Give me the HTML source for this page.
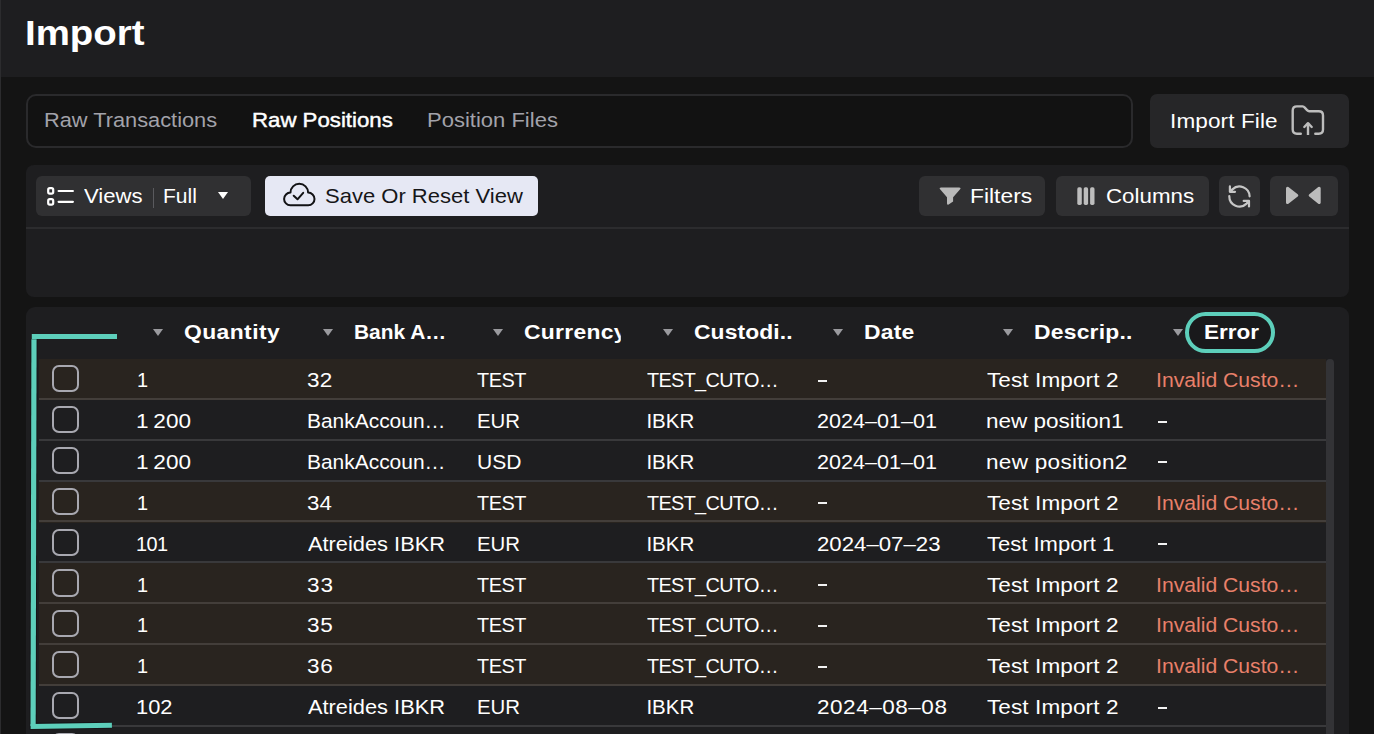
<!DOCTYPE html>
<html><head><meta charset="utf-8"><style>*{box-sizing:border-box;margin:0;padding:0}
html,body{width:1374px;height:734px;overflow:hidden;background:#141414;font-family:"Liberation Sans",sans-serif;color:#fff}
.a{position:absolute}
.t{position:absolute;line-height:24px;white-space:nowrap}
.btn{position:absolute;top:176px;height:40px;border-radius:6px;background:#303032}
.row{position:absolute;left:39px;width:1287px;background:#1e1e20}
.row.e{background:#29241f}
.sep{position:absolute;left:39px;width:1287px;height:2px;background:rgba(255,255,255,0.12)}
.cb{position:absolute;left:52px;width:27.2px;height:27.2px;border:2px solid #a8a8b0;border-radius:7px}
.tri{position:absolute;width:0;height:0;border-left:5.5px solid transparent;border-right:5.5px solid transparent;border-top:7px solid #9a9a9e}
</style></head><body>
<div class="a" style="left:0;top:0;width:1374px;height:77px;background:#1e1e20"></div>
<div class="a" style="left:0;top:0;width:1px;height:734px;background:#2c2c2e"></div>
<div class="a" style="left:26px;top:94px;width:1107px;height:54px;border:2px solid #2a2a2c;border-radius:10px;background:#121212"></div>
<div class="a" style="left:1150px;top:94px;width:199px;height:54px;border-radius:7px;background:#262628"></div>
<svg class="a" style="left:1285px;top:100px" width="46" height="40" viewBox="0 0 46 40" fill="none" stroke="#bdbdbd" stroke-width="2.4" stroke-linecap="round" stroke-linejoin="round">
<path d="M15.8 33.7H11.9Q7.7 33.7 7.7 29.5V10.6Q7.7 6.4 11.9 6.4H17.6Q18.8 6.4 19.5 7.4L22.3 10.3Q23 11.2 24.2 11.2H33.8Q38 11.2 38 15.4V29.5Q38 33.7 33.8 33.7H30.3"/>
<path d="M23 35V23.2" stroke-linecap="butt"/><path d="M19.3 27L23 23.2L26.7 27"/></svg>
<div class="a" style="left:26px;top:165px;width:1323px;height:132px;border-radius:8px;background:#1e1e20"></div>
<div class="a" style="left:26px;top:227px;width:1323px;height:2px;background:#2c2c2e"></div>
<div class="btn" style="left:36px;width:215px"></div>
<div class="btn" style="left:265px;width:273px;background:#e6e8f4;border-radius:5px"></div>
<div class="btn" style="left:919px;width:126px"></div>
<div class="btn" style="left:1056px;width:153px"></div>
<div class="btn" style="left:1219px;width:41px"></div>
<div class="btn" style="left:1270px;width:68px"></div>
<svg class="a" style="left:42px;top:182px" width="38" height="28" viewBox="0 0 38 28" fill="none" stroke="#fff" stroke-width="2.2" stroke-linecap="round">
<rect x="6.2" y="6.2" width="5" height="5.4" rx="1.6"/><rect x="6.2" y="17.2" width="5" height="5.4" rx="1.6"/>
<path d="M16.6 9H30.9M16.6 19.85H30.9"/></svg>
<div class="a" style="left:152.5px;top:188px;width:1.5px;height:20px;background:#5a5a5e"></div>
<div class="a" style="left:217.6px;top:192px;width:0;height:0;border-left:5.8px solid transparent;border-right:5.8px solid transparent;border-top:7px solid #fff"></div>
<svg class="a" style="left:278px;top:178px" width="44" height="34" viewBox="0 0 44 34" fill="none" stroke="#121214" stroke-width="2" stroke-linecap="round" stroke-linejoin="round">
<path d="M12.4 27.3A6.3 6.3 0 0 1 12.5 14.6A8.8 8.8 0 1 1 30.1 14.6A6.3 6.3 0 0 1 30.2 27.3Z"/>
<path d="M15.7 17.8L19.5 21.3L25.2 14.8"/></svg>
<svg class="a" style="left:934px;top:182px" width="32" height="28" viewBox="0 0 32 28">
<path d="M7 5.5H25.2Q27.4 5.5 26.1 7.3L19.1 15.3V19.6L14.6 22.4Q13 23.2 13 21.5V15.3L6.1 7.3Q4.8 5.5 7 5.5Z" fill="#b9b9b9"/></svg>
<svg class="a" style="left:1072px;top:182px" width="28" height="28" viewBox="0 0 28 28" fill="#bdbdbd">
<rect x="5.3" y="5.3" width="4.5" height="17.6" rx="1.6"/><rect x="11.7" y="5.3" width="4.4" height="17.6" rx="1.6"/><rect x="18.1" y="5.3" width="4.4" height="17.6" rx="1.6"/></svg>
<svg class="a" style="left:1224px;top:180.7px" width="32" height="32" viewBox="0 0 32 32" fill="none" stroke="#c6c6c6" stroke-width="2.2" stroke-linecap="round" stroke-linejoin="round">
<path d="M25.6 15.3A10.2 10.2 0 0 0 8.4 8.4L5.9 10.8M5.9 5.4V10.8H11"/>
<path d="M5.3 15.2A10.2 10.2 0 0 0 22.6 22.6L25 20M19.7 19.9H25V25.4"/></svg>
<svg class="a" style="left:1280px;top:180px" width="48" height="32" viewBox="0 0 48 32" fill="#bcbcbc" stroke="#bcbcbc" stroke-width="3" stroke-linejoin="round">
<path d="M7.5 8.3L16.8 15.4L7.5 22.5Z"/><path d="M39.2 8.3L30.2 15.4L39.2 22.5Z"/></svg>
<div class="a" style="left:26px;top:307px;width:1323px;height:460px;border-radius:9px;background:#1e1e20"></div>
<div class="row e" style="top:359.000px;height:40.875px"></div>
<div class="row" style="top:399.875px;height:40.875px"></div>
<div class="row" style="top:440.750px;height:40.875px"></div>
<div class="row e" style="top:481.625px;height:40.875px"></div>
<div class="row" style="top:522.500px;height:40.875px"></div>
<div class="row e" style="top:563.375px;height:40.875px"></div>
<div class="row e" style="top:604.250px;height:40.875px"></div>
<div class="row e" style="top:645.125px;height:40.875px"></div>
<div class="row" style="top:686.000px;height:40.875px"></div>
<div class="row" style="top:726.875px;height:40.875px"></div>
<div class="sep" style="top:397.775px"></div>
<div class="sep" style="top:438.650px"></div>
<div class="sep" style="top:479.525px"></div>
<div class="sep" style="top:520.400px"></div>
<div class="sep" style="top:561.275px"></div>
<div class="sep" style="top:602.150px"></div>
<div class="sep" style="top:643.025px"></div>
<div class="sep" style="top:683.900px"></div>
<div class="sep" style="top:724.775px"></div>
<div class="sep" style="top:765.650px"></div>
<div class="cb" style="top:365.000px"></div>
<div class="cb" style="top:405.875px"></div>
<div class="cb" style="top:446.750px"></div>
<div class="cb" style="top:487.625px"></div>
<div class="cb" style="top:528.500px"></div>
<div class="cb" style="top:569.375px"></div>
<div class="cb" style="top:610.250px"></div>
<div class="cb" style="top:651.125px"></div>
<div class="cb" style="top:692.000px"></div>
<div class="cb" style="top:732.875px"></div>
<div class="a" style="left:1326.3px;top:359.3px;width:7.8px;height:400px;border-radius:4px;background:#333336"></div>
<div class="tri" style="left:152.7px;top:328.6px"></div>
<div class="tri" style="left:322.8px;top:328.6px"></div>
<div class="tri" style="left:492.8px;top:328.6px"></div>
<div class="tri" style="left:662.8px;top:328.6px"></div>
<div class="tri" style="left:832.8px;top:328.6px"></div>
<div class="tri" style="left:1003px;top:328.6px"></div>
<div class="tri" style="left:1172.8px;top:328.6px"></div>
<div class="a" style="left:1185.2px;top:311.9px;width:90px;height:41.1px;border:4.9px solid #5dcfbb;border-radius:21px;background:#19191b"></div>
<div class="t" style="left:25.0px;top:20.5px;font-size:35px;font-weight:bold;color:#ffffff;letter-spacing:0.0px;transform:scaleX(1.0981);transform-origin:0 0">Import</div>
<div class="t" style="left:43.5px;top:107.8px;font-size:20.5px;font-weight:normal;color:#a2a2aa;letter-spacing:0.0px;transform:scaleX(1.0623);transform-origin:0 0">Raw Transactions</div>
<div class="t" style="left:251.6px;top:107.9px;font-size:20.5px;font-weight:normal;color:#ffffff;letter-spacing:0.0px;transform:scaleX(1.0837);transform-origin:0 0;-webkit-text-stroke:0.45px #fff">Raw Positions</div>
<div class="t" style="left:427.3px;top:107.9px;font-size:20.5px;font-weight:normal;color:#a2a2aa;letter-spacing:0.0px;transform:scaleX(1.0736);transform-origin:0 0">Position Files</div>
<div class="t" style="left:1169.5px;top:108.5px;font-size:20.5px;font-weight:normal;color:#ffffff;letter-spacing:0.1px;transform:scaleX(1.1);transform-origin:0 0">Import File</div>
<div class="t" style="left:83.9px;top:184.0px;font-size:20.8px;font-weight:normal;color:#ffffff;letter-spacing:-0.0px;transform:scaleX(1.0636);transform-origin:0 0">Views</div>
<div class="t" style="left:163.0px;top:184.0px;font-size:20.8px;font-weight:normal;color:#ffffff;letter-spacing:0.0px;transform:scaleX(1.0097);transform-origin:0 0">Full</div>
<div class="t" style="left:324.62px;top:183.6px;font-size:20.8px;font-weight:normal;color:#161618;letter-spacing:0.0px;transform:scaleX(1.0586);transform-origin:0 0">Save Or Reset View</div>
<div class="t" style="left:970.1px;top:183.5px;font-size:20.8px;font-weight:normal;color:#ffffff;letter-spacing:0.0px;transform:scaleX(1.0981);transform-origin:0 0">Filters</div>
<div class="t" style="left:1106.4px;top:183.5px;font-size:20.8px;font-weight:normal;color:#ffffff;letter-spacing:0.0px;transform:scaleX(1.0728);transform-origin:0 0">Columns</div>
<div class="t" style="left:183.8px;top:319.5px;font-size:20.8px;font-weight:bold;color:#ffffff;letter-spacing:0.377px;transform:scaleX(1.1);transform-origin:0 0">Quantity</div>
<div class="t" style="left:354.3px;top:319.5px;font-size:20.8px;font-weight:bold;color:#ffffff;letter-spacing:0.0px;transform:scaleX(1.0056);transform-origin:0 0">Bank A…</div>
<div class="t" style="left:524.0px;top:319.5px;font-size:20.8px;font-weight:bold;color:#ffffff;letter-spacing:0.26px;transform:scaleX(1.1);transform-origin:0 0;width:88.18px;overflow:hidden">Currency</div>
<div class="t" style="left:693.6px;top:319.5px;font-size:20.8px;font-weight:bold;color:#ffffff;letter-spacing:0.08px;transform:scaleX(1.1);transform-origin:0 0">Custodi..</div>
<div class="t" style="left:863.82px;top:319.5px;font-size:20.8px;font-weight:bold;color:#ffffff;letter-spacing:0.212px;transform:scaleX(1.1);transform-origin:0 0">Date</div>
<div class="t" style="left:1033.8px;top:319.5px;font-size:20.8px;font-weight:bold;color:#ffffff;letter-spacing:0.205px;transform:scaleX(1.1);transform-origin:0 0">Descrip..</div>
<div class="t" style="left:1204.4px;top:319.5px;font-size:20.8px;font-weight:bold;color:#ffffff;letter-spacing:0.0px;transform:scaleX(1.084);transform-origin:0 0">Error</div>
<div class="t" style="left:136.8px;top:368.2px;font-size:20.5px;font-weight:normal;color:#ffffff;letter-spacing:0px;transform:scaleX(0.97);transform-origin:0 0">1</div>
<div class="t" style="left:306.7px;top:368.2px;font-size:20.5px;font-weight:normal;color:#ffffff;letter-spacing:0.182px;transform:scaleX(1.1);transform-origin:0 0">32</div>
<div class="t" style="left:476.89px;top:368.2px;font-size:20.5px;font-weight:normal;color:#ffffff;letter-spacing:-0.46px;transform:scaleX(0.97);transform-origin:0 0">TEST</div>
<div class="t" style="left:646.89px;top:368.2px;font-size:20.5px;font-weight:normal;color:#ffffff;letter-spacing:-0.699px;transform:scaleX(0.97);transform-origin:0 0">TEST_CUTO…</div>
<div class="t" style="left:987.04px;top:368.2px;font-size:20.5px;font-weight:normal;color:#ffffff;letter-spacing:0.083px;transform:scaleX(1.1);transform-origin:0 0">Test Import 2</div>
<div class="t" style="left:1156.2px;top:368.2px;font-size:20.5px;font-weight:normal;color:#e8806a;letter-spacing:0.0px;transform:scaleX(1.0319);transform-origin:0 0">Invalid Custo…</div>
<div class="t" style="left:135.9px;top:409.07px;font-size:20.5px;font-weight:normal;color:#ffffff;letter-spacing:0.091px;transform:scaleX(1.1);transform-origin:0 0">1 200</div>
<div class="t" style="left:306.84px;top:409.07px;font-size:20.5px;font-weight:normal;color:#ffffff;letter-spacing:0.0px;transform:scaleX(1.0212);transform-origin:0 0">BankAccoun…</div>
<div class="t" style="left:477.2px;top:409.07px;font-size:20.5px;font-weight:normal;color:#ffffff;letter-spacing:0.0px;transform:scaleX(0.9951);transform-origin:0 0">EUR</div>
<div class="t" style="left:646.4px;top:409.07px;font-size:20.5px;font-weight:normal;color:#ffffff;letter-spacing:0.0px">IBKR</div>
<div class="t" style="left:816.9px;top:409.07px;font-size:20.5px;font-weight:normal;color:#ffffff;letter-spacing:-0.0px;transform:scaleX(1.0518);transform-origin:0 0">2024–01–01</div>
<div class="t" style="left:986.03px;top:409.07px;font-size:20.5px;font-weight:normal;color:#ffffff;letter-spacing:0.0px;transform:scaleX(1.0976);transform-origin:0 0">new position1</div>
<div class="t" style="left:135.9px;top:449.95px;font-size:20.5px;font-weight:normal;color:#ffffff;letter-spacing:0.091px;transform:scaleX(1.1);transform-origin:0 0">1 200</div>
<div class="t" style="left:306.84px;top:449.95px;font-size:20.5px;font-weight:normal;color:#ffffff;letter-spacing:0.0px;transform:scaleX(1.0212);transform-origin:0 0">BankAccoun…</div>
<div class="t" style="left:477.3px;top:449.95px;font-size:20.5px;font-weight:normal;color:#ffffff;letter-spacing:0.0px;transform:scaleX(1.0262);transform-origin:0 0">USD</div>
<div class="t" style="left:646.4px;top:449.95px;font-size:20.5px;font-weight:normal;color:#ffffff;letter-spacing:0.0px">IBKR</div>
<div class="t" style="left:816.9px;top:449.95px;font-size:20.5px;font-weight:normal;color:#ffffff;letter-spacing:-0.0px;transform:scaleX(1.0518);transform-origin:0 0">2024–01–01</div>
<div class="t" style="left:986.03px;top:449.95px;font-size:20.5px;font-weight:normal;color:#ffffff;letter-spacing:0.258px;transform:scaleX(1.1);transform-origin:0 0">new position2</div>
<div class="t" style="left:136.8px;top:490.82px;font-size:20.5px;font-weight:normal;color:#ffffff;letter-spacing:0px;transform:scaleX(0.97);transform-origin:0 0">1</div>
<div class="t" style="left:306.6px;top:490.82px;font-size:20.5px;font-weight:normal;color:#ffffff;letter-spacing:0.0px;transform:scaleX(1.0864);transform-origin:0 0">34</div>
<div class="t" style="left:476.89px;top:490.82px;font-size:20.5px;font-weight:normal;color:#ffffff;letter-spacing:-0.46px;transform:scaleX(0.97);transform-origin:0 0">TEST</div>
<div class="t" style="left:646.89px;top:490.82px;font-size:20.5px;font-weight:normal;color:#ffffff;letter-spacing:-0.699px;transform:scaleX(0.97);transform-origin:0 0">TEST_CUTO…</div>
<div class="t" style="left:987.04px;top:490.82px;font-size:20.5px;font-weight:normal;color:#ffffff;letter-spacing:0.083px;transform:scaleX(1.1);transform-origin:0 0">Test Import 2</div>
<div class="t" style="left:1156.2px;top:490.82px;font-size:20.5px;font-weight:normal;color:#e8806a;letter-spacing:0.0px;transform:scaleX(1.0319);transform-origin:0 0">Invalid Custo…</div>
<div class="t" style="left:135.84px;top:531.7px;font-size:20.5px;font-weight:normal;color:#ffffff;letter-spacing:-0.536px;transform:scaleX(0.97);transform-origin:0 0">101</div>
<div class="t" style="left:307.6px;top:531.7px;font-size:20.5px;font-weight:normal;color:#ffffff;letter-spacing:0.0px;transform:scaleX(1.0641);transform-origin:0 0">Atreides IBKR</div>
<div class="t" style="left:477.2px;top:531.7px;font-size:20.5px;font-weight:normal;color:#ffffff;letter-spacing:0.0px;transform:scaleX(0.9951);transform-origin:0 0">EUR</div>
<div class="t" style="left:646.4px;top:531.7px;font-size:20.5px;font-weight:normal;color:#ffffff;letter-spacing:0.0px">IBKR</div>
<div class="t" style="left:816.9px;top:531.7px;font-size:20.5px;font-weight:normal;color:#ffffff;letter-spacing:-0.0px;transform:scaleX(1.083);transform-origin:0 0">2024–07–23</div>
<div class="t" style="left:987.06px;top:531.7px;font-size:20.5px;font-weight:normal;color:#ffffff;letter-spacing:0.0px;transform:scaleX(1.0737);transform-origin:0 0">Test Import 1</div>
<div class="t" style="left:136.8px;top:572.58px;font-size:20.5px;font-weight:normal;color:#ffffff;letter-spacing:0px;transform:scaleX(0.97);transform-origin:0 0">1</div>
<div class="t" style="left:306.6px;top:572.58px;font-size:20.5px;font-weight:normal;color:#ffffff;letter-spacing:0.818px;transform:scaleX(1.1);transform-origin:0 0">33</div>
<div class="t" style="left:476.89px;top:572.58px;font-size:20.5px;font-weight:normal;color:#ffffff;letter-spacing:-0.46px;transform:scaleX(0.97);transform-origin:0 0">TEST</div>
<div class="t" style="left:646.89px;top:572.58px;font-size:20.5px;font-weight:normal;color:#ffffff;letter-spacing:-0.699px;transform:scaleX(0.97);transform-origin:0 0">TEST_CUTO…</div>
<div class="t" style="left:987.04px;top:572.58px;font-size:20.5px;font-weight:normal;color:#ffffff;letter-spacing:0.083px;transform:scaleX(1.1);transform-origin:0 0">Test Import 2</div>
<div class="t" style="left:1156.2px;top:572.58px;font-size:20.5px;font-weight:normal;color:#e8806a;letter-spacing:0.0px;transform:scaleX(1.0319);transform-origin:0 0">Invalid Custo…</div>
<div class="t" style="left:136.8px;top:613.45px;font-size:20.5px;font-weight:normal;color:#ffffff;letter-spacing:0px;transform:scaleX(0.97);transform-origin:0 0">1</div>
<div class="t" style="left:306.6px;top:613.45px;font-size:20.5px;font-weight:normal;color:#ffffff;letter-spacing:0.727px;transform:scaleX(1.1);transform-origin:0 0">35</div>
<div class="t" style="left:476.89px;top:613.45px;font-size:20.5px;font-weight:normal;color:#ffffff;letter-spacing:-0.46px;transform:scaleX(0.97);transform-origin:0 0">TEST</div>
<div class="t" style="left:646.89px;top:613.45px;font-size:20.5px;font-weight:normal;color:#ffffff;letter-spacing:-0.699px;transform:scaleX(0.97);transform-origin:0 0">TEST_CUTO…</div>
<div class="t" style="left:987.04px;top:613.45px;font-size:20.5px;font-weight:normal;color:#ffffff;letter-spacing:0.083px;transform:scaleX(1.1);transform-origin:0 0">Test Import 2</div>
<div class="t" style="left:1156.2px;top:613.45px;font-size:20.5px;font-weight:normal;color:#e8806a;letter-spacing:0.0px;transform:scaleX(1.0319);transform-origin:0 0">Invalid Custo…</div>
<div class="t" style="left:136.8px;top:654.33px;font-size:20.5px;font-weight:normal;color:#ffffff;letter-spacing:0px;transform:scaleX(0.97);transform-origin:0 0">1</div>
<div class="t" style="left:306.6px;top:654.33px;font-size:20.5px;font-weight:normal;color:#ffffff;letter-spacing:0.727px;transform:scaleX(1.1);transform-origin:0 0">36</div>
<div class="t" style="left:476.89px;top:654.33px;font-size:20.5px;font-weight:normal;color:#ffffff;letter-spacing:-0.46px;transform:scaleX(0.97);transform-origin:0 0">TEST</div>
<div class="t" style="left:646.89px;top:654.33px;font-size:20.5px;font-weight:normal;color:#ffffff;letter-spacing:-0.699px;transform:scaleX(0.97);transform-origin:0 0">TEST_CUTO…</div>
<div class="t" style="left:987.04px;top:654.33px;font-size:20.5px;font-weight:normal;color:#ffffff;letter-spacing:0.083px;transform:scaleX(1.1);transform-origin:0 0">Test Import 2</div>
<div class="t" style="left:1156.2px;top:654.33px;font-size:20.5px;font-weight:normal;color:#e8806a;letter-spacing:0.0px;transform:scaleX(1.0319);transform-origin:0 0">Invalid Custo…</div>
<div class="t" style="left:135.69px;top:695.2px;font-size:20.5px;font-weight:normal;color:#ffffff;letter-spacing:0.0px;transform:scaleX(1.0656);transform-origin:0 0">102</div>
<div class="t" style="left:307.6px;top:695.2px;font-size:20.5px;font-weight:normal;color:#ffffff;letter-spacing:0.0px;transform:scaleX(1.0641);transform-origin:0 0">Atreides IBKR</div>
<div class="t" style="left:477.2px;top:695.2px;font-size:20.5px;font-weight:normal;color:#ffffff;letter-spacing:0.0px;transform:scaleX(0.9951);transform-origin:0 0">EUR</div>
<div class="t" style="left:646.4px;top:695.2px;font-size:20.5px;font-weight:normal;color:#ffffff;letter-spacing:0.0px">IBKR</div>
<div class="t" style="left:816.9px;top:695.2px;font-size:20.5px;font-weight:normal;color:#ffffff;letter-spacing:0.455px;transform:scaleX(1.1);transform-origin:0 0">2024–08–08</div>
<div class="t" style="left:987.05px;top:695.2px;font-size:20.5px;font-weight:normal;color:#ffffff;letter-spacing:0.083px;transform:scaleX(1.1);transform-origin:0 0">Test Import 2</div>
<div class="a" style="left:818.2px;top:380px;width:8.7px;height:2px;background:#f2f2f2"></div>
<div class="a" style="left:1158.2px;top:421px;width:8.7px;height:2px;background:#f2f2f2"></div>
<div class="a" style="left:1158.2px;top:461px;width:8.7px;height:2px;background:#f2f2f2"></div>
<div class="a" style="left:818.2px;top:502px;width:8.7px;height:2px;background:#f2f2f2"></div>
<div class="a" style="left:1158.2px;top:543px;width:8.7px;height:2px;background:#f2f2f2"></div>
<div class="a" style="left:818.2px;top:584px;width:8.7px;height:2px;background:#f2f2f2"></div>
<div class="a" style="left:818.2px;top:625px;width:8.7px;height:2px;background:#f2f2f2"></div>
<div class="a" style="left:818.2px;top:666px;width:8.7px;height:2px;background:#f2f2f2"></div>
<div class="a" style="left:1158.2px;top:707px;width:8.7px;height:2px;background:#f2f2f2"></div>
<svg class="a" style="left:0;top:300px" width="140" height="434" viewBox="0 300 140 434" fill="none">
<path d="M34 339L33.1 726.2L111.5 725.3" stroke="#0e0e10" stroke-width="7" opacity="0.6"/>
<path d="M31.8 336.5H117" stroke="#5dcfbb" stroke-width="5"/>
<path d="M34 339.2L33.1 726" stroke="#5dcfbb" stroke-width="5.2"/>
<path d="M30.6 726.4L111.9 725.3" stroke="#5dcfbb" stroke-width="5"/>
</svg>
</body></html>
